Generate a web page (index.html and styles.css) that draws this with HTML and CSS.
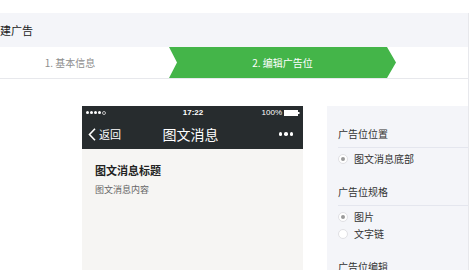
FILE: index.html
```html
<!DOCTYPE html>
<html lang="zh-CN">

<head>
    <meta charset="UTF-8">
    <title>新建广告</title>
    <link rel="stylesheet" href="styles.css">
</head>

<body>
    <div class="main">
        <div class="title-bar">
            <span class="title">新建广告</span>
        </div>
        <div class="steps">
            <div class="step done">1. 基本信息</div>
            <div class="step current">2. 编辑广告位</div>
        </div>
        <div class="content">
            <div class="phone">
                <div class="status">
                    <span class="signal"><i></i><i></i><i></i><i></i><i class="off"></i></span>
                    <span class="time">17:22</span>
                    <span class="battery">100%
                        <svg width="16" height="6" viewBox="0 0 16 6">
                            <rect x="0" y="0" width="14" height="6" fill="#fff" />
                            <rect x="14" y="2" width="1.5" height="2" fill="#fff" />
                        </svg>
                    </span>
                </div>
                <div class="nav">
                    <span class="back">
                        <svg width="8" height="13" viewBox="0 0 8 13">
                            <polyline points="7,0.8 1.5,6.5 7,12.2" fill="none" stroke="#fff" stroke-width="1.6" />
                        </svg>
                        返回
                    </span>
                    <span class="nav-title">图文消息</span>
                    <span class="more"><i></i><i></i><i></i></span>
                </div>
                <div class="msg">
                    <div class="msg-title">图文消息标题</div>
                    <div class="msg-desc">图文消息内容</div>
                </div>
            </div>
            <div class="panel">
                <div class="section">
                    <div class="section-head">广告位位置</div>
                    <div class="options">
                        <label class="radio checked"><i></i>图文消息底部</label>
                    </div>
                </div>
                <div class="section">
                    <div class="section-head">广告位规格</div>
                    <div class="options">
                        <label class="radio checked"><i></i>图片</label>
                        <label class="radio"><i></i>文字链</label>
                    </div>
                </div>
                <div class="section">
                    <div class="section-head">广告位编辑</div>
                </div>
            </div>
        </div>
    </div>
</body>

</html>
```

FILE: styles.css
```css
html,
body {
    margin: 0;
    padding: 0;
    width: 476px;
    height: 270px;
    overflow: hidden;
    background-color: #fff;
    font-family: "Noto Sans CJK SC", sans-serif;
    color: #333;
}

.main {
    width: 469px;
    height: 257px;
    margin-top: 13px;
    border-right: 1px solid #e7e8ec;
    box-sizing: border-box;
    overflow: hidden;
}

.title-bar {
    height: 34px;
    line-height: 34px;
    background-color: #f4f5f9;
    font-size: 11px;
    color: #222;
    white-space: nowrap;
}

.title-bar .title {
    margin-left: -11px;
}

.steps {
    display: flex;
    height: 31px;
    border-bottom: 1px solid #e7e8ec;
    font-size: 10px;
    line-height: 31px;
}

.step {
    text-align: center;
    white-space: nowrap;
}

.step.done {
    width: 169px;
    padding-right: 29px;
    box-sizing: border-box;
    color: #8d8d8d;
}

.step.current {
    width: 227px;
    background-color: #44b549;
    color: #fff;
    clip-path: polygon(0 0, 218px 0, 227px 50%, 218px 100%, 0 100%, 8px 50%);
}

.content {
    display: flex;
    gap: 24px;
    padding: 27px 0 0 82px;
}

.phone {
    width: 221px;
    height: 200px;
    flex-shrink: 0;
    background-color: #f6f5f3;
}

.status {
    display: flex;
    justify-content: space-between;
    align-items: center;
    height: 13px;
    padding: 0 3px 0 4px;
    background-color: #272c2e;
    color: #fff;
    font-size: 7px;
    font-family: "Liberation Sans", Arial, sans-serif;
}

.status .signal {
    display: flex;
    gap: 1px;
    width: 50px;
}

.status .signal i {
    width: 3px;
    height: 3px;
    border-radius: 50%;
    background-color: #fff;
}

.status .signal i.off {
    width: 2px;
    height: 2px;
    background-color: transparent;
    border: 0.5px solid #bbb;
}

.status .time {
    font-weight: bold;
    font-size: 8px;
}

.status .battery {
    display: flex;
    align-items: center;
    gap: 2px;
    width: 50px;
    justify-content: flex-end;
    font-size: 8px;
}

.nav {
    display: flex;
    align-items: center;
    justify-content: space-between;
    height: 30px;
    padding: 0 10px 0 6px;
    background-color: #272c2e;
    color: #fff;
}

.nav .back {
    display: flex;
    align-items: center;
    gap: 3px;
    width: 50px;
    font-size: 11px;
}

.nav .nav-title {
    font-size: 14px;
}

.nav .more {
    display: flex;
    justify-content: flex-end;
    gap: 2px;
    width: 50px;
}

.nav .more i {
    width: 3.5px;
    height: 3.5px;
    border-radius: 50%;
    background-color: #fff;
}

.msg {
    padding: 14px 13px 0;
}

.msg-title {
    font-size: 11px;
    line-height: 14px;
    font-weight: bold;
    color: #222;
}

.msg-desc {
    margin-top: 6px;
    font-size: 9px;
    line-height: 14px;
    color: #666;
}

.panel {
    flex: 1;
    height: 200px;
    padding: 5px 0 0 11px;
    background-color: #f4f5f9;
    font-size: 10px;
}

.section {
    margin-top: 10px;
}

.section-head {
    height: 26px;
    line-height: 26px;
    border-bottom: 1px solid #e4e6ee;
    color: #333;
}

.options {
    padding: 2px 0;
}

.radio {
    display: flex;
    align-items: center;
    gap: 6px;
    height: 17px;
    color: #333;
}

.radio i {
    width: 10px;
    height: 10px;
    border: 1px solid #e0e0e4;
    border-radius: 50%;
    background-color: #fff;
    box-sizing: border-box;
    position: relative;
}

.radio.checked i::after {
    content: "";
    position: absolute;
    left: 2px;
    top: 2px;
    width: 4px;
    height: 4px;
    border-radius: 50%;
    background-color: #9a9a9a;
}
```
